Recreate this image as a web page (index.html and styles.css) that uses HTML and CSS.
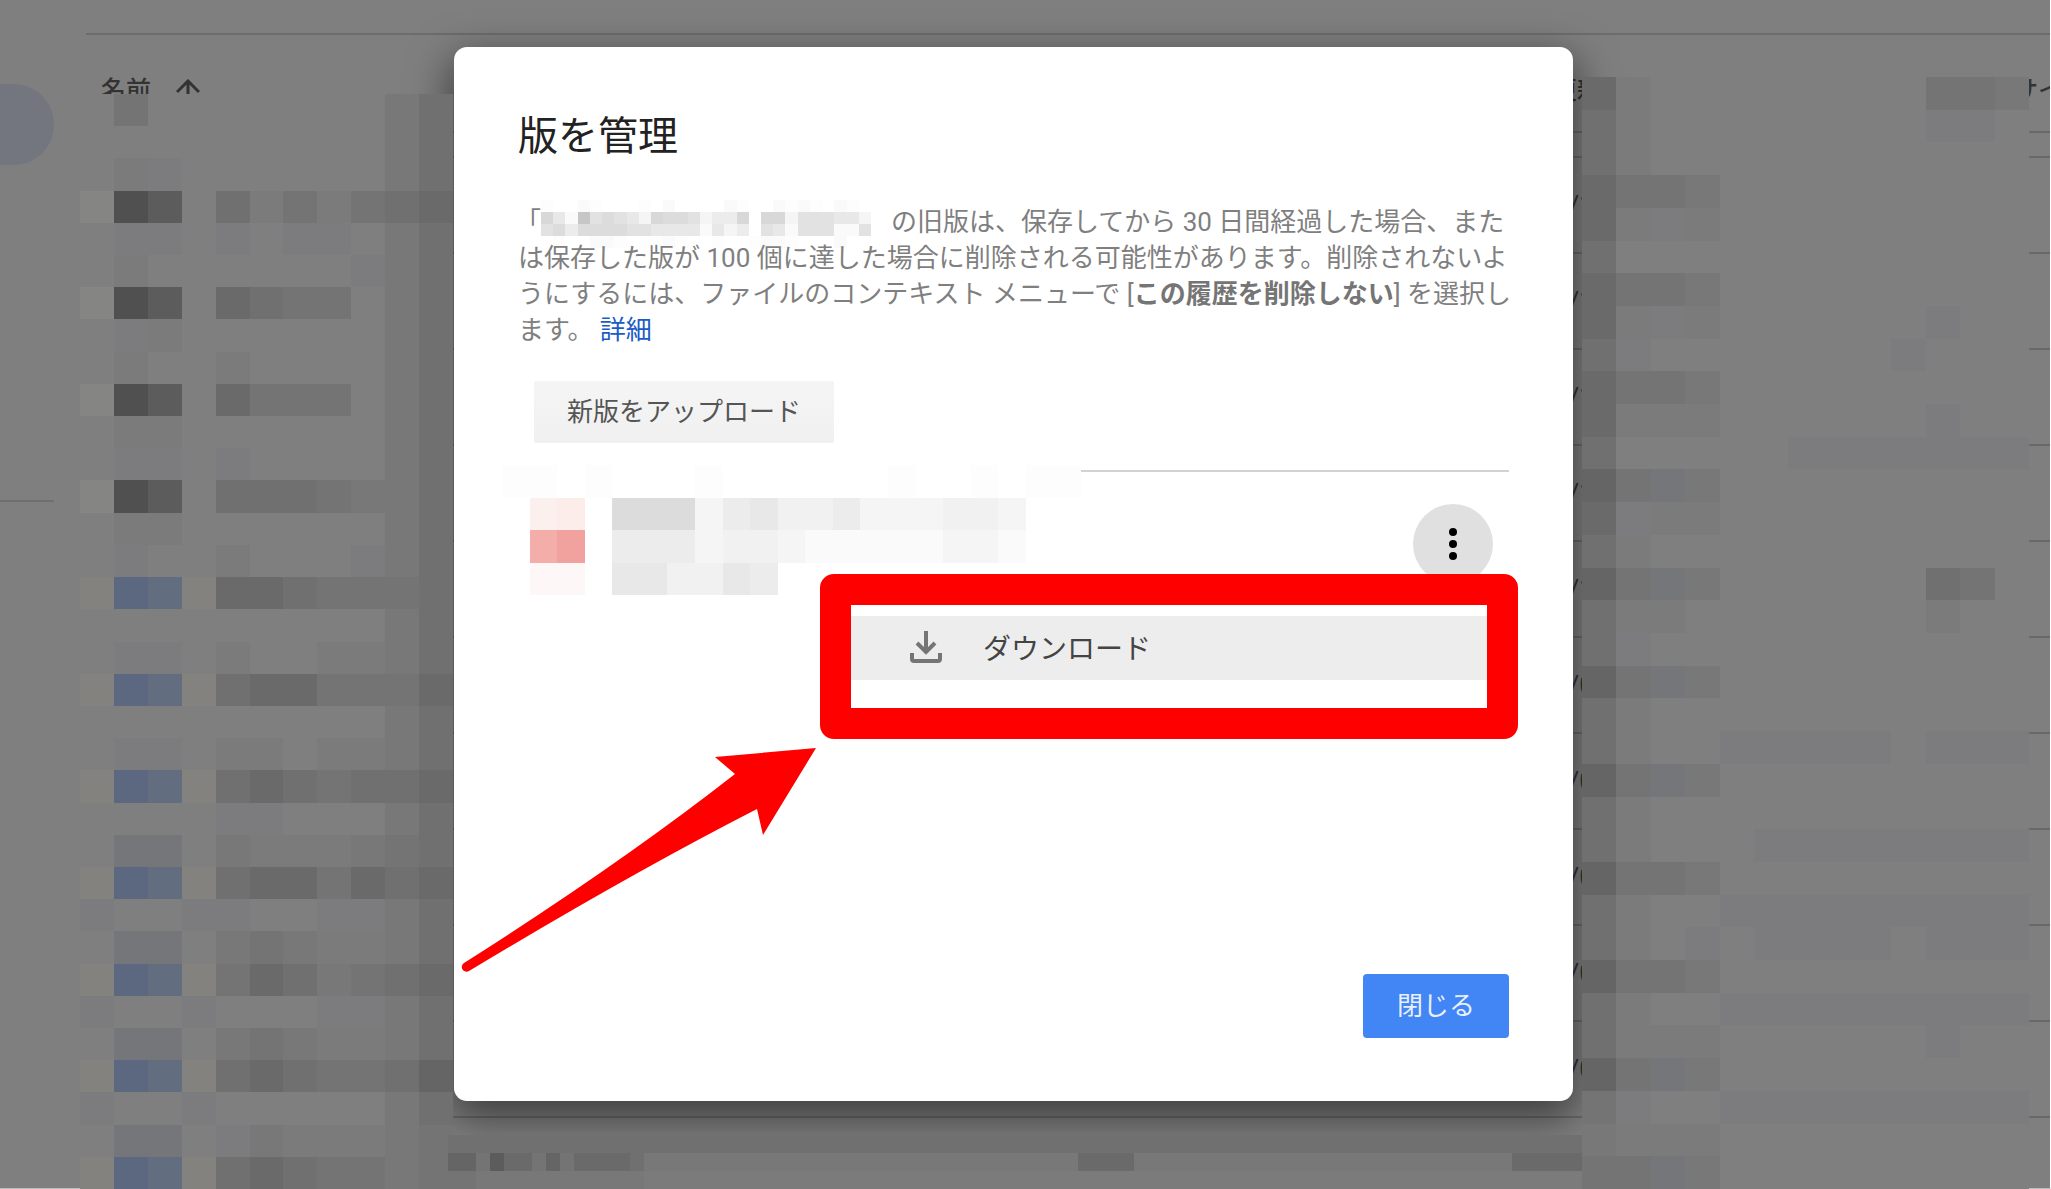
FILE: index.html
```html
<!DOCTYPE html>
<html lang="ja">
<head>
    <meta charset="UTF-8">
    <meta name="viewport" content="width=device-width, initial-scale=1.0">
    <title>版を管理</title>
    <link rel="stylesheet" href="styles.css">
</head>
<body>
    <div class="page">
        <aside class="sidebar">
            <div class="sidebar-active"></div>
            <hr class="sidebar-line">
        </aside>
        <main class="files">
            <table class="file-table">
                <thead>
                    <tr>
                        <th class="col-name">名前
                            <svg class="sort-icon" viewBox="0 0 24 24" aria-hidden="true"><path d="M12 22V3M1 13L12 2l11 11" fill="none" stroke="currentColor" stroke-width="3"/></svg>
                        </th>
                        <th class="col-date">最終更新</th>
                        <th class="col-size">サイズ</th>
                    </tr>
                    <tr class="spacer"><td colspan="3"></td></tr>
                </thead>
                <tbody id="file-rows"></tbody>
            </table>
        </main>
    </div>

    <div class="overlay">
        <section class="dialog" role="dialog" aria-labelledby="dialog-title">
            <h1 id="dialog-title">版を管理</h1>
            <p class="description">
                <span class="open-quote">「</span><span class="mosaic name-mosaic" id="name-mosaic"></span>の旧版は、保存してから 30 日間経過した場合、また<br>
                は保存した版が 100 個に達した場合に削除される可能性があります。削除されないよ<br>
                うにするには、ファイルのコンテキスト メニューで [<b>この履歴を削除しない</b>] を選択し<br>
                ます。 <a href="#">詳細</a>
            </p>
            <button type="button" class="upload">新版をアップロード</button>

            <div class="version">
                <div class="mosaic version-mosaic" id="version-mosaic"></div>
                <button type="button" class="more" aria-label="その他の操作">
                    <svg viewBox="0 0 80 80" aria-hidden="true"><circle cx="40" cy="28" r="4"/><circle cx="40" cy="40" r="4"/><circle cx="40" cy="52" r="4"/></svg>
                </button>
            </div>

            <div class="menu">
                <button type="button" class="menu-item">
                    <svg class="download-icon" viewBox="0 0 34 34" aria-hidden="true"><path d="M3 23v6q0 2 2 2h24q2 0 2-2v-6M17 1v20M8 13l9 9 9-9" fill="none" stroke="currentColor" stroke-width="4"/></svg>
                    ダウンロード
                </button>
            </div>

            <svg class="arrow" viewBox="0 0 360 230" aria-hidden="true"><path d="M356 4L255 13l20 17Q160 120 4 219a4 4 0 0 0 5 8Q170 130 297 65l6 26z" fill="#f00"/></svg>

            <div class="actions">
                <button type="button" class="close">閉じる</button>
            </div>
        </section>
    </div>

    <div class="mosaic mosaic-left" id="mosaic-left"></div>
    <div class="mosaic mosaic-right" id="mosaic-right"></div>
    <div class="mosaic mosaic-bottom" id="mosaic-bottom"></div>

    <script src="script.js"></script>
</body>
</html>
```
FILE: styles.css
```css
* {
    box-sizing: border-box;
}
body {
    margin: 0;
    position: relative;
    min-height: 100vh;
    overflow: hidden;
    background-color: #7f7f7f;
    font-family: Roboto, "Noto Sans CJK JP", sans-serif;
    font-size: 26px;
    color: #333;
}
button {
    font: inherit;
    border: 0;
    cursor: pointer;
}

/* file list behind the dialog */
.page {
    position: absolute;
    inset: 0;
    display: flex;
    gap: 32px;
    overflow: hidden;
    border-right: 1px solid #fff;
    border-bottom: 1px solid #bbb;
}
.sidebar {
    flex: 0 0 54px;
    padding-top: 84px;
}
.sidebar-active {
    height: 81px;
    border-radius: 0 40px 40px 0;
    background-color: #73767f;
}
.sidebar-line {
    margin: 335px 0 0;
    border: 0;
    border-top: 2px solid #6f6f6f;
}
.files {
    flex: 1;
    min-width: 0;
    padding-top: 33px;
}
.file-table {
    width: 100%;
    table-layout: fixed;
    border-collapse: separate;
    border-spacing: 0;
    border-top: 2px solid #6c6c6c;
}
.file-table th,
.file-table td {
    padding: 0;
    border-bottom: 2px solid #696969;
    text-align: left;
    white-space: nowrap;
}
.file-table th {
    height: 98px;
    padding-top: 9px;
    font-size: 25px;
    font-weight: 500;
}
.file-table td {
    height: 96px;
}
.file-table .spacer td {
    height: 25px;
}
.file-table .col-name {
    padding-left: 15px;
}
.col-date {
    width: 511px;
}
.file-table td.date {
    padding-left: 8px;
}
.col-size {
    width: 37px;
}
.sort-icon {
    width: 24px;
    height: 24px;
    margin-left: 19px;
    vertical-align: -4px;
}

/* dialog */
.overlay {
    position: relative;
    display: flex;
    justify-content: center;
    min-height: 100vh;
    padding: 47px 24px 88px 0;
}
.dialog {
    position: relative;
    display: flex;
    flex-direction: column;
    align-items: flex-start;
    width: 100%;
    max-width: 1119px;
    padding: 66px 64px 63px;
    border-radius: 13px;
    background-color: #fff;
    box-shadow: 0 14px 40px 4px rgba(0, 0, 0, 0.5);
}
h1 {
    margin: 0;
    font-size: 40px;
    font-weight: 400;
    line-height: 48px;
    color: #222;
}
.description {
    margin: 43px 0 0;
    line-height: 36px;
    color: #7f7f7f;
    white-space: nowrap;
}
.description b {
    color: #757575;
}
.description a {
    color: #1a5cc4;
    text-decoration: none;
}
.upload {
    height: 62px;
    margin: 33px 0 0 16px;
    padding: 0 33px 6px;
    border-radius: 2px;
    background-image: linear-gradient(#f5f5f5, #f0f0f0);
    color: #555;
}
.version {
    display: flex;
    justify-content: space-between;
    align-self: stretch;
    margin-top: 27px;
    padding-right: 16px;
    border-top: 2px solid #d2d2d2;
}
.more {
    width: 80px;
    height: 80px;
    margin-top: 32px;
    padding: 0;
    border-radius: 50%;
    background-color: #e0e0e0;
}
.more svg {
    display: block;
}

/* menu with the red marker round it */
.menu {
    position: absolute;
    top: 527px;
    left: 366px;
    width: 698px;
    padding: 11px 0 28px;
    border: 31px solid #f00;
    border-radius: 14px;
    background-color: #fff;
}
.menu-item {
    display: flex;
    align-items: center;
    gap: 40px;
    width: 100%;
    height: 64px;
    padding: 0 58px 2px;
    background-color: #ededed;
    font-size: 28px;
    color: #444;
}
.download-icon {
    width: 34px;
    height: 34px;
    color: #757575;
}
.arrow {
    position: absolute;
    top: 697px;
    left: 6px;
    width: 360px;
    height: 230px;
}
.actions {
    align-self: flex-end;
    margin-top: auto;
}
.close {
    height: 64px;
    padding: 0 34px 6px;
    border-radius: 4px;
    background-color: #4285f4;
    color: #e8f0fe;
}

/* pixelated areas */
.mosaic {
    display: grid;
}
.name-mosaic {
    display: inline-grid;
    grid-template: repeat(4, 12px) / repeat(27, 1fr);
    width: 330px;
    margin: -12px 20px -12px 0;
    vertical-align: middle;
}
.open-quote {
    margin-left: -3px;
}
.version-mosaic {
    grid-template: repeat(4, 1fr) / repeat(21, 1fr);
    width: 579px;
    height: 130px;
    margin: -7px 0 0 -16px;
}
.mosaic-left {
    position: absolute;
    top: 94px;
    bottom: 0;
    left: 80px;
    width: 373px;
    grid-template: repeat(34, 1fr) / repeat(11, 1fr);
}
.mosaic-right {
    position: absolute;
    top: 77px;
    right: 22px;
    bottom: 0;
    width: 447px;
    grid-template: repeat(34, 1fr) / repeat(13, 1fr);
}
.mosaic-bottom {
    position: absolute;
    right: 469px;
    bottom: 0;
    left: 448px;
    height: 54px;
    grid-template: repeat(3, 1fr) / repeat(81, 1fr);
}
```
FILE: script.js
```js
// one letter per cell
const greys = {
    '.': '#7f7f7f', a: '#858584', b: '#505051', c: '#5c5c5d', d: '#656565',
    e: '#6a6a6a', f: '#707070', g: '#747474', h: '#787878', i: '#7b7b7b',
    j: '#7c7c7e', p: '#75767a', w: '#83827e', B: '#5b6880', C: '#636d80'
};
const lights = {
    '.': '#ffffff', a: '#c6c6c6', b: '#d8d8d8', c: '#dcdcdc', k: '#e2e2e2',
    d: '#e8e8e8', e: '#ececec', f: '#f1f1f1', g: '#f5f5f5', h: '#fafafa',
    i: '#fdfdfd', r: '#fcf0ef', s: '#fcecea', R: '#f4aeaa', S: '#f1a29e', t: '#fdf8f7'
};

function drawMosaic(id, colors, rows) {
    document.getElementById(id).innerHTML = rows.join('').split('')
        .map(c => `<span style="background:${colors[c]}"></span>`).join('');
}

drawMosaic('mosaic-left', greys, [
    '.g.......hf', '.........hf', '.ij......hf',
    'abc.figigfe', '.jj.j.jj.hf', '.i......jhf',
    'abc.efgg.hf', '.ji......hf', '.i..i....hf',
    'abc.eggg.hf', '.ii......hf', '.jj.j....hf',
    'abc.fffghhf', '.ii......hf', '.j..i...jhf',
    'wBCweefgggf', '.........hf', '.jj.i..iihf',
    'wBCwfeeggge', '.........hf', '.jj.ii.iihf',
    'wBCwfefgffe', '....jj...hf', '.pp.hiiihgf',
    'wBCwfeegefe', 'j..jj..jjhf', '.pp.hghiihf',
    'wBCwgefhgfe', 'j..j...jjhf', '.pp.hghiihf',
    'wBCwfefggfd', 'j..j.....hf', '.pp.jhiiihg',
    'wBCwfefgghg'
]);

drawMosaic('mosaic-right', greys, [
    'ei........ggh', 'fi........jj.', 'fi...........',
    'eggh.........', 'eiji.........', 'f............',
    'eggh.........', 'eiji......j..', 'fj.......j...',
    'eggh.........', 'eiii......j..', 'f.....jjjjjjj',
    'dgph.........', 'ejii.........', 'fi...........',
    'dgph......fg.', 'fii.......i..', 'fj...........',
    'dgph.........', 'fi...........', 'fi..jjjjj.jjj',
    'dgph.........', 'fi...........', 'fi...jjjjjjjj',
    'dggh.........', 'fi..jjjjjjjjj', 'fi.j.jjjj.jjj',
    'dggh.........', 'fi..jjjjjjjjj', 'fiii......j..',
    'dgph.........', 'gj..jjjjjjjjj', 'hiii.........',
    'ggph.........'
]);

drawMosaic('mosaic-bottom', greys, [
    'f'.repeat(81),
    'ddgceegdgeeeef' + 'h'.repeat(31) + 'eeee' + 'h'.repeat(27) + 'eeeee',
    'gg' + 'h'.repeat(12) + 'i'.repeat(67)
]);

drawMosaic('name-mosaic', lights, [
    'i..hi...i.h....hi..hihi.hi.',
    'bdhakckdgbcckgeeb.bbgkkkddg',
    'kcecccckkdddd' + 'hdge.kdhkkkhhk',
    '.i..hhi.iihi..i..ihhi...h..'
]);

drawMosaic('version-mosaic', lights, [
    'ii.i...i......i..i.ii',
    '.rs.cccgedffegggffg..',
    '.RS.eeegffghhhhhggh..',
    '.tt.ddffde...........'
]);

const dates = ['2020/1', '2020/1', '2020/1', '2020/1', '2020/1',
    '2020/0', '2020/0', '2020/0', '2020/0', '2020/0', '2020/0'];
document.getElementById('file-rows').innerHTML = dates
    .map(d => `<tr><td></td><td class="date">${d}</td><td></td></tr>`).join('');
```
